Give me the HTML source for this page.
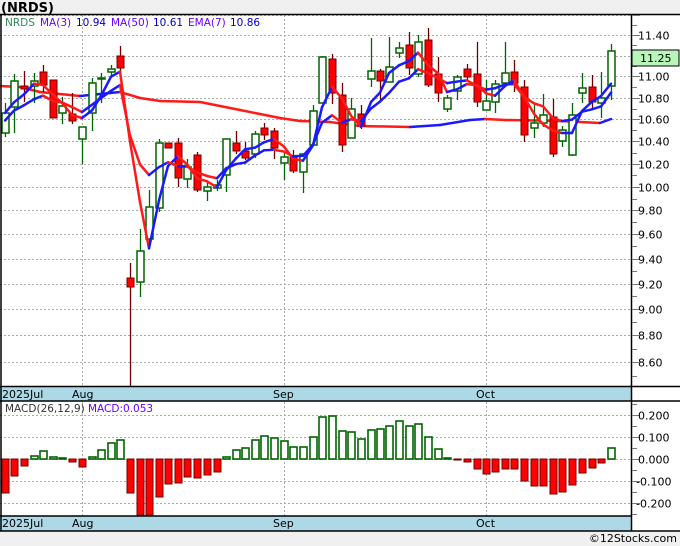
<!DOCTYPE html>
<html><head><meta charset="utf-8"><style>
html,body{margin:0;padding:0;background:#f0f0f0;}
body{width:680px;height:546px;overflow:hidden;position:relative;font-family:"DejaVu Sans","Liberation Sans",sans-serif;}
svg{position:absolute;left:0;top:0;}
</style></head><body>
<svg id="s" width="680" height="546" xmlns="http://www.w3.org/2000/svg" font-family="DejaVu Sans, Liberation Sans, sans-serif">
<rect x="0" y="14" width="680" height="517" fill="#fff"/>
<text x="1" y="12" font-size="13" font-weight="bold" fill="#000">(NRDS)</text>
<g id="grid" stroke="#aaa" stroke-width="1" stroke-dasharray="2,2"></g>
<g id="main"></g>
<rect x="0" y="387" width="631" height="14" fill="#add8e6"/>
<rect x="0" y="516" width="631" height="15" fill="#add8e6"/>
<g stroke="#000" stroke-width="1.5">
<line x1="0" y1="14.5" x2="680" y2="14.5"/>
<line x1="0" y1="386.5" x2="680" y2="386.5"/>
<line x1="0" y1="401" x2="680" y2="401"/>
<line x1="0" y1="516" x2="631" y2="516"/>
<line x1="0" y1="531" x2="680" y2="531"/>
<line x1="1" y1="14" x2="1" y2="531"/>
<line x1="631.5" y1="14" x2="631.5" y2="531"/>
</g>
<g font-size="11" fill="#000">
<text x="2" y="398">2025Jul</text><text x="72" y="398">Aug</text><text x="273" y="398">Sep</text><text x="476" y="398">Oct</text>
<text x="2" y="527">2025Jul</text><text x="72" y="527">Aug</text><text x="273" y="527">Sep</text><text x="476" y="527">Oct</text>
</g>
<g font-size="10.5">
<text x="5" y="26" fill="#2e8b57">NRDS</text>
<text x="40" y="26" fill="#6a00ff">MA(3)</text>
<text x="76" y="26" fill="#0000cc">10.94</text>
<text x="111" y="26" fill="#6a00ff">MA(50)</text>
<text x="153" y="26" fill="#0000cc">10.61</text>
<text x="188" y="26" fill="#6a00ff">EMA(7)</text>
<text x="230" y="26" fill="#0000cc">10.86</text>
<text x="5" y="412" fill="#333">MACD(26,12,9)</text>
<text x="88" y="412" fill="#6a00ff">MACD:0.053</text>
</g>
<g id="axis" font-size="11" fill="#000"></g>
<rect x="632" y="50" width="47" height="16" fill="#b8f5b8" stroke="#000" stroke-width="1"/>
<text x="640" y="62" font-size="11" fill="#000">11.25</text>
<text x="677" y="542" font-size="11" text-anchor="end" fill="#000">©12Stocks.com</text>
</svg>
<script>
var NS="http://www.w3.org/2000/svg";
function el(p,t,a){var e=document.createElementNS(NS,t);for(var k in a)e.setAttribute(k,a[k]);p.appendChild(e);return e;}
var g=document.getElementById('grid'),m=document.getElementById('main'),ax=document.getElementById('axis');
function py(p){return 35+1160*(Math.log(11.4)-Math.log(p));}
for(var v=11.6;v>8.5;v-=0.2){var y=Math.round(py(v))+0.5;if(y>15&&y<386)el(g,'line',{x1:0,y1:y,x2:631,y2:y});
 el(ax,'line',{x1:632,y1:y,x2:640,y2:y,stroke:'#777'});
 var y2=Math.round(py(v-0.1))+0.5;if(y2<386)el(ax,'line',{x1:632,y1:y2,x2:637,y2:y2,stroke:'#777'});
 if(y>20&&y<384&&Math.abs(v-11.2)>0.05){var t=el(ax,'text',{x:638,y:y+4});t.textContent=v.toFixed(2);}}
[0.2,0.1,0,-0.1,-0.2].forEach(function(v){var y=459-v*220+0.5;el(g,'line',{x1:0,y1:y,x2:631,y2:y});
 el(ax,'line',{x1:632,y1:y,x2:640,y2:y,stroke:'#777'});var t=el(ax,'text',{x:v<0?636:638,y:y+4});t.textContent=(v<0?'-':'')+Math.abs(v).toFixed(3);});
[404,426,448,470,492,514].forEach(function(y){el(ax,'line',{x1:632,y1:y+.5,x2:637,y2:y+.5,stroke:'#777'});});
[82,284,486].forEach(function(x){el(g,'line',{x1:x+.5,y1:15,x2:x+.5,y2:386});el(g,'line',{x1:x+.5,y1:402,x2:x+.5,y2:516});});
var C=[[5,'g',113,133,103,137],[14,'g',81,107,74,133],[24,'r',86,89,71,102],[34,'g',81,86,73,103],[43,'r',72,85,65,92],[53,'r',80,118,80,118],[62,'g',106,113,97,124],[72,'r',114,121,93,124],[82,'g',127,139,127,164],[92,'g',83,113,78,131],[101,'g',78,79,73,103],[111,'g',69,72,65,77],[120,'r',56,68,46,73],[130,'r',278,287,263,386],[140,'g',251,282,229,297],[149,'g',207,239,190,247],[159,'g',143,208,139,212],[168,'r',143,148,143,148],[178,'r',143,178,138,187],[187,'g',167,179,159,188],[197,'r',155,190,152,192],[207,'g',187,191,183,201],[217,'g',185,188,180,191],
[226,'g',139,175,139,192],[236,'r',143,151,131,154],[245,'r',151,158,142,160],[255,'g',134,154,131,158],[264,'r',128,135,123,140],[274,'r',131,148,128,159],[284,'g',157,163,153,180],[293,'r',157,171,150,173],[303,'g',154,172,154,193],[313,'g',111,145,105,145],[322,'g',57,103,56,103],[332,'r',59,93,54,104],[342,'r',95,145,83,152],[351,'g',109,138,98,138],[361,'r',114,126,105,129],[371,'g',71,79,38,87],[380,'r',71,81,69,100],[389,'g',67,82,37,82],[399,'g',48,53,42,58],[409,'r',45,68,32,75],[418,'g',42,74,35,77],[428,'r',40,85,28,87],
[438,'r',74,93,57,102],[447,'g',98,109,95,112],[457,'g',77,91,75,100],[467,'r',69,77,64,80],[477,'r',74,102,42,107],[486,'g',101,110,80,110],[495,'g',84,102,80,113],[505,'g',73,83,42,83],[514,'r',72,83,60,92],[524,'r',87,135,80,142],[534,'g',123,128,103,138],[543,'g',115,123,94,127],[553,'r',117,154,99,157],[562,'g',130,141,126,147],[572,'g',115,155,103,156],[582,'g',88,93,73,103],[592,'r',87,102,75,108],[601,'g',98,103,72,118],[611,'g',51,86,44,100]];
var closes=C.map(function(c){return c[1]=='g'?c[2]:c[3];});
function line(pts,w){for(var i=1;i<pts.length;i++){var a=pts[i-1],b=pts[i];el(m,'line',{x1:a[0],y1:a[1],x2:b[0],y2:b[1],stroke:b[1]>a[1]+0.3?'#ff1a1a':'#1a1aff','stroke-width':w,'stroke-linecap':'round'});}}
line([[0,86],[20,87],[40,92],[80,96],[120,92],[140,98],[160,101],[200,102],[240,110],[280,118],[300,121],[330,122],[360,126],[410,127],[440,125],[470,120],[485,119],[505,120],[560,121],[600,123],[611,119]],2.5);
C.forEach(function(c){var col=c[1]=='g'?'#006400':'#700000';
 el(m,'line',{x1:c[0]+.5,y1:c[4],x2:c[0]+.5,y2:c[5],stroke:col,'stroke-width':1.3});
 el(m,'rect',{x:c[0]-3,y:c[2],width:7,height:Math.max(1,c[3]-c[2]),fill:c[1]=='g'?'#fff':'#ff0000',stroke:col,'stroke-width':c[1]=='g'?1.5:1});});
var ma=[],em=[],e=closes[0]+10;
for(var i=0;i<C.length;i++){var a=closes[Math.max(0,i-2)],b=closes[Math.max(0,i-1)];ma.push([C[i][0],(a+b+closes[i])/3]);e=e+(closes[i]-e)*0.25;em.push([C[i][0],e]);}
line(ma,2.5);line(em,2.5);
var H=[-34,-17,-7,3,8,2,1,-3,-8,2,9,16,19,-34,-56,-56,-38,-25,-24,-18,-19,-16,-13,2,9,11,19,23,21,18,12,12,22,42,43,28,27,20,29,30,33,38,33,35,22,10,1,-1,-3,-10,-15,-13,-10,-10,-22,-27,-27,-35,-33,-26,-14,-9,-4,11];
C.forEach(function(c,i){var h=H[i];if(h>0)el(m,'rect',{x:c[0]-3,y:459-h,width:7,height:h,fill:'#fff',stroke:'#006400','stroke-width':1.6});
 else el(m,'rect',{x:c[0]-3,y:459,width:7,height:Math.max(1,-h),fill:'#ff0000',stroke:'#700000','stroke-width':1});});
</script>
</body></html>
